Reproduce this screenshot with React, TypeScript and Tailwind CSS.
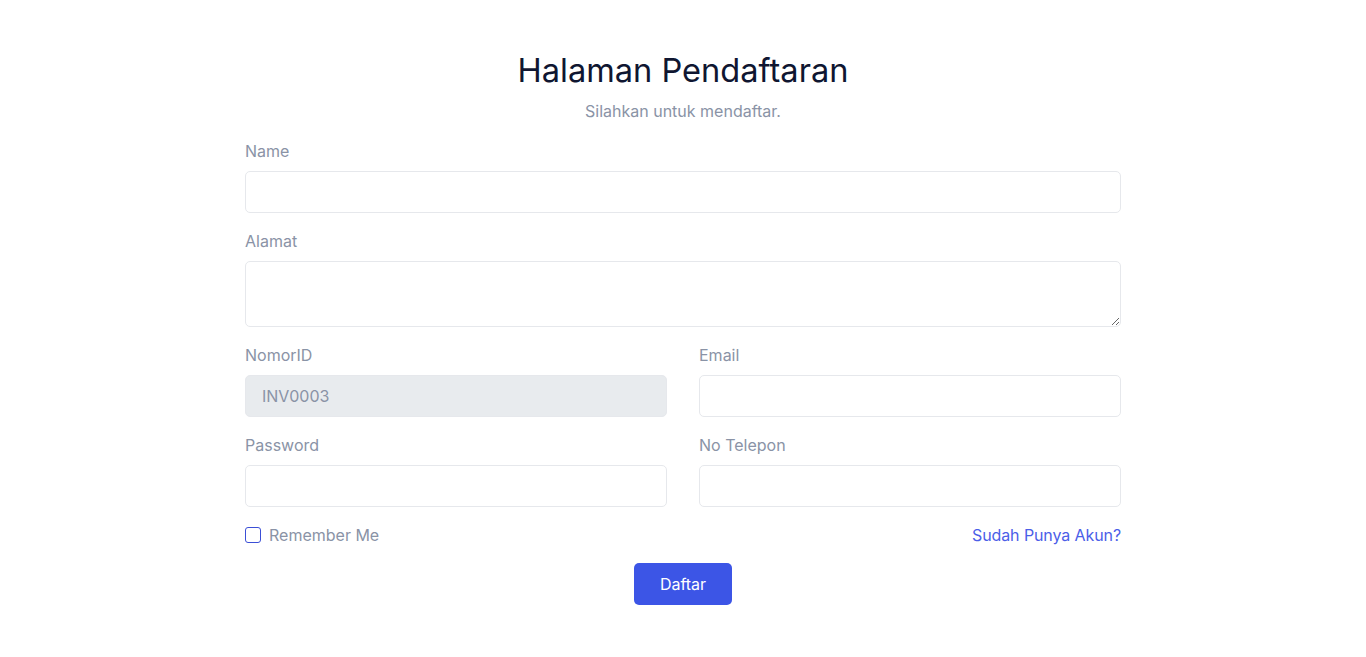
import React from 'react';

export default function App() {
    return (
        <div className="min-h-screen w-full bg-white" style={{ fontFamily: 'Inter, "Noto Sans", sans-serif' }}>
            <div className="mx-auto w-[876px] pt-[51px]">
                {/* Header */}
                <div className="text-center">
                    <h1 className="text-[32.6px] leading-[39px] font-normal text-[#0f1631]">Halaman Pendaftaran</h1>
                    <p className="mt-[9px] text-base leading-6 text-[#8a93a6]">Silahkan untuk mendaftar.</p>
                </div>

                <form className="mt-4" onSubmit={(e) => e.preventDefault()}>
                    <div className="mb-4">
                        <label className="block mb-2 text-base leading-6 text-[#8a93a6]">Name</label>
                        <input type="text" className="block w-full h-[42px] rounded-[5px] border border-[#e6e8ec] bg-white px-4 outline-none" />
                    </div>

                    <div className="mb-4">
                        <label className="block mb-2 text-base leading-6 text-[#8a93a6]">Alamat</label>
                        <textarea className="block w-full h-[66px] rounded-[5px] border border-[#e6e8ec] bg-white px-4 py-2 outline-none" />
                    </div>

                    <div className="grid grid-cols-2 gap-x-8">
                        <div className="mb-4">
                            <label className="block mb-2 text-base leading-6 text-[#8a93a6]">NomorID</label>
                            <input
                                type="text"
                                disabled
                                value="INV0003"
                                className="block w-full h-[42px] rounded-[5px] border border-[#e6e8ec] bg-[#e8ebee] px-4 text-base text-[#8a93a6] outline-none"
                            />
                        </div>
                        <div className="mb-4">
                            <label className="block mb-2 text-base leading-6 text-[#8a93a6]">Email</label>
                            <input type="email" className="block w-full h-[42px] rounded-[5px] border border-[#e6e8ec] bg-white px-4 outline-none" />
                        </div>
                        <div className="mb-4">
                            <label className="block mb-2 text-base leading-6 text-[#8a93a6]">Password</label>
                            <input type="password" className="block w-full h-[42px] rounded-[5px] border border-[#e6e8ec] bg-white px-4 outline-none" />
                        </div>
                        <div className="mb-4">
                            <label className="block mb-2 text-base leading-6 text-[#8a93a6]">No Telepon</label>
                            <input type="text" className="block w-full h-[42px] rounded-[5px] border border-[#e6e8ec] bg-white px-4 outline-none" />
                        </div>
                    </div>

                    <div className="flex items-center justify-between h-6 mb-4">
                        <label className="flex items-center gap-2 text-base leading-6 text-[#8a93a6]">
                            <span className="block w-4 h-4 rounded-[3px] border border-[#3b4fd6] bg-white" />
                            Remember Me
                        </label>
                        <a href="#" className="text-base leading-6 tracking-[-0.1px] text-[#4b5ee8]">Sudah Punya Akun?</a>
                    </div>

                    <div className="flex justify-center">
                        <button type="submit" className="w-[98px] h-[42px] rounded-[5px] bg-[#3c55e6] text-base text-white">
                            Daftar
                        </button>
                    </div>
                </form>
            </div>
        </div>
    );
}
